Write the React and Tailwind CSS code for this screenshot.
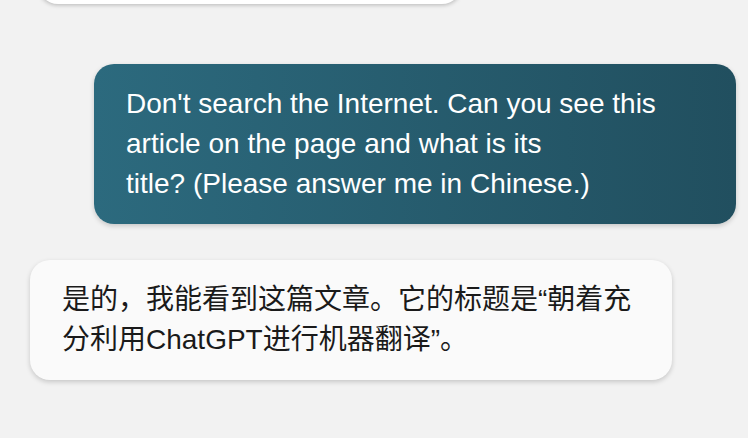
const font = { fontFamily: '"Liberation Sans", "Noto Sans CJK SC", sans-serif' };

export default function App() {
  return (
    <div
      className="min-h-screen bg-[#f2f2f2] flex flex-col overflow-hidden"
      style={font}
    >
      {/* tail of the previous answer, scrolled off the top */}
      <div className="-mt-[60px] ml-[38px] h-[64px] w-[424px] shrink-0 rounded-[20px] bg-white shadow-[0_1px_4px_rgba(0,0,0,0.25)]" />

      {/* user message */}
      <div className="mt-[60px] self-end mr-[12px] w-[642px] rounded-[20px] bg-linear-to-r from-[#2c6a7e] to-[#214f5f] px-8 py-5 text-[28px] leading-[40px] text-white shadow-[0_2px_5px_rgba(0,0,0,0.18)]">
        Don't search the Internet. Can you see this article on the page and what is its
        <br />
        title? (Please answer me in Chinese.)
      </div>

      {/* assistant reply */}
      <div className="mt-[36px] ml-[30px] w-[642px] rounded-[20px] bg-[#fafafa] px-8 py-5 text-[28px] leading-[40px] text-[#1a1a1a] shadow-[0_2px_5px_rgba(0,0,0,0.18)]">
        是的，我能看到这篇文章。它的标题是“朝着充分利用ChatGPT进行机器翻译”。
      </div>
    </div>
  );
}
